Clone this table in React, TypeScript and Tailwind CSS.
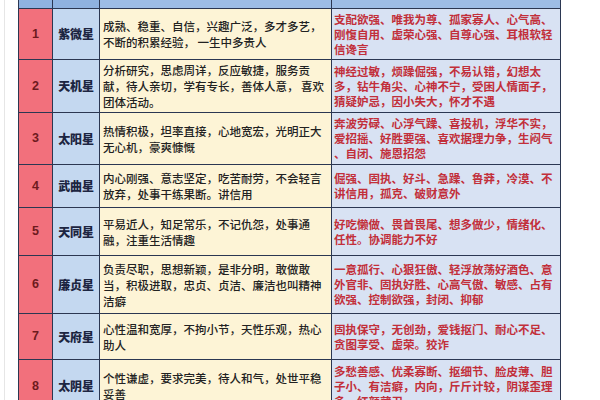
import React from "react";

type Row = { n: string; name: string; good: string[]; bad: string[]; h: string };

const rows: Row[] = [
  {
    n: "1",
    name: "紫微星",
    good: ["成熟、稳重、自信，兴趣广泛，多才多艺，", "不断的积累经验， 一生中多贵人"],
    bad: ["支配欲强、唯我为尊、孤家寡人、心气高、", "刚愎自用、虚荣心强、自尊心强、耳根软轻", "信谗言"],
    h: "h-[50px]",
  },
  {
    n: "2",
    name: "天机星",
    good: ["分析研究，思虑周详，反应敏捷，服务贡", "献，待人亲切，学有专长，善体人意， 喜欢", "团体活动。"],
    bad: ["神经过敏，烦躁倔强，不易认错，幻想太", "多，钻牛角尖、心神不宁，受困人情面子，", "猜疑妒忌，因小失大，怀才不遇"],
    h: "h-[52px]",
  },
  {
    n: "3",
    name: "太阳星",
    good: ["热情积极，坦率直接，心地宽宏，光明正大", "无心机，豪爽慷慨"],
    bad: ["奔波劳碌、心浮气躁、喜投机，浮华不实，", "爱招摇、好胜要强、喜欢据理力争，生闷气", "、自闭、施恩招怨"],
    h: "h-[51px]",
  },
  {
    n: "4",
    name: "武曲星",
    good: ["内心刚强、意志坚定，吃苦耐劳，不会轻言", "放弃，处事干练果断。讲信用"],
    bad: ["倔强、固执、好斗、急躁、鲁莽，冷漠、不", "讲信用，孤克、破财意外"],
    h: "h-[42px]",
  },
  {
    n: "5",
    name: "天同星",
    good: ["平易近人，知足常乐，不记仇怨，处事通", "融，注重生活情趣"],
    bad: ["好吃懒做、畏首畏尾、想多做少，情绪化、", "任性。协调能力不好"],
    h: "h-[47px]",
  },
  {
    n: "6",
    name: "廉贞星",
    good: ["负责尽职，思想新颖，是非分明，敢做敢", "当，积极进取，忠贞、贞洁、廉洁也叫精神", "洁癖"],
    bad: ["一意孤行、心狠狂傲、轻浮放荡好酒色、意", "外官非、固执好胜、心高气傲、敏感、占有", "欲强、控制欲强，封闭、抑郁"],
    h: "h-[57px]",
  },
  {
    n: "7",
    name: "天府星",
    good: ["心性温和宽厚，不拘小节，天性乐观，热心", "助人"],
    bad: ["固执保守，无创劲，爱钱抠门、耐心不足、", "贪图享受、虚荣。狡诈"],
    h: "h-[45px]",
  },
  {
    n: "8",
    name: "太阴星",
    good: ["个性谦虚，要求完美，待人和气，处世平稳", "妥善"],
    bad: ["多愁善感、优柔寡断、抠细节、脸皮薄、胆", "子小、有洁癖，内向，斤斤计较，阴谋歪理", "多、红颜薄卫"],
    h: "h-[52px]",
  },
];

const cjk = { fontFamily: '"Noto Sans CJK SC", "Noto Sans", sans-serif' };

export default function App() {
  return (
    <div className="w-[600px] h-[400px] overflow-hidden bg-white flex" style={cjk}>
      <div className="w-[18px] shrink-0 flex">
        <div className="ml-[4px] w-px h-full bg-[#e6e6e6]" />
      </div>
      <div className="w-[543px] shrink-0 self-start flex flex-col gap-[1px] bg-[#2b3752] px-[1px] pb-[1px]">
        <div className="h-[8px] grid grid-cols-[33px_46px_231px_228px] gap-[1px]">
          <div className="bg-[#8fb2e0]" />
          <div className="bg-[#8fb2e0]" />
          <div className="bg-[#9dbde6]" />
          <div className="bg-[#9dbde6]" />
        </div>
        {rows.map((r) => (
          <div key={r.n} className={`${r.h} grid grid-cols-[33px_46px_231px_228px] gap-[1px]`}>
            <div className="bg-[#f2707c] flex items-center justify-center">
              <span
                className="text-[12.5px] font-bold text-[#6e1a1e]"
                style={{ fontFamily: '"Liberation Sans", Arial, sans-serif' }}
              >
                {r.n}
              </span>
            </div>
            <div className="bg-[#c4d8f0] flex items-center justify-center">
              <span className="text-[12px] font-black text-[#1c2541] tracking-[-0.2px] whitespace-nowrap">
                {r.name}
              </span>
            </div>
            <div className="bg-[#fdf4d6] flex flex-col justify-center pl-[3px]">
              {r.good.map((l, i) => (
                <div key={i} className="text-[11.5px] leading-[16px] font-medium text-[#222222] whitespace-nowrap">
                  {l}
                </div>
              ))}
            </div>
            <div className="bg-[#d8e2f3] flex flex-col justify-center pl-[2px]">
              {r.bad.map((l, i) => (
                <div key={i} className="text-[11.5px] leading-[15px] font-bold text-[#c22f3a] whitespace-nowrap">
                  {l}
                </div>
              ))}
            </div>
          </div>
        ))}
      </div>
    </div>
  );
}
